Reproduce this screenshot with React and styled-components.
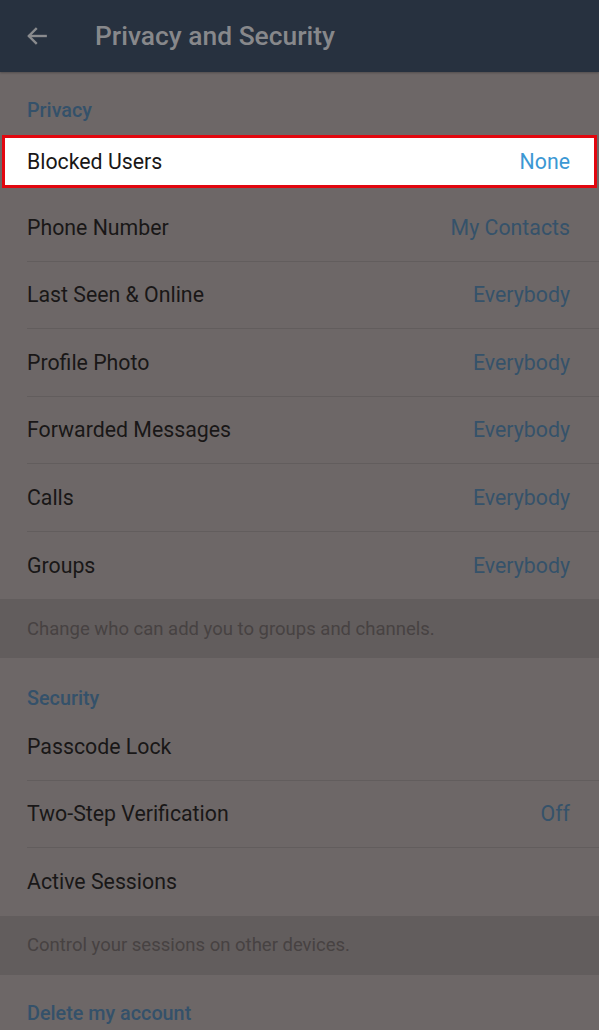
import React from "react";
import styled, { createGlobalStyle } from "styled-components";

const Global = createGlobalStyle`
  html, body { margin: 0; padding: 0; background: #6d6767; }
  body { font-family: Roboto, "Noto Sans", "Liberation Sans", sans-serif; }
  * { box-sizing: border-box; }
`;

const Page = styled.div`
  width: 599px;
  height: 1030px;
  overflow: hidden;
  background: #6d6767;
  display: flex;
  flex-direction: column;
`;

const Header = styled.header`
  height: 72px;
  flex: none;
  background: #27313f;
  display: flex;
  align-items: center;
  padding-left: 24px;
  gap: 45px;
  box-shadow: 0 1px 2px rgba(0, 0, 0, 0.25);
`;

const BackIcon = styled.svg`
  width: 26px;
  height: 26px;
  flex: none;
`;

const Title = styled.h1`
  margin: 0;
  font-size: 26.4px;
  font-weight: 500;
  color: #87888b;
`;

const SectionTitle = styled.div`
  height: ${(p) => p.$h}px;
  flex: none;
  padding: 0 27px;
  display: flex;
  align-items: flex-end;
  padding-bottom: ${(p) => p.$pb}px;
  font-size: 19.8px;
  font-weight: 500;
  color: #34516a;
`;

const Row = styled.div`
  height: 67.5px;
  flex: none;
  margin-left: 27px;
  padding-right: 29px;
  display: flex;
  align-items: center;
  justify-content: space-between;
  border-bottom: ${(p) => (p.$divider ? "1px solid #625d5d" : "none")};
`;

const Label = styled.span`
  font-size: 21.3px;
  color: #191717;
`;

const Value = styled.span`
  font-size: 21.3px;
  color: ${(p) => (p.$bright ? "#3c98d4" : "#35526a")};
`;

const HighlightWrap = styled.div`
  height: 68px;
  flex: none;
  padding: 9px 2px 6px 2px;
  display: flex;
`;

const HighlightBox = styled.div`
  flex: 1;
  background: #ffffff;
  border: 3px solid #e2070f;
  display: flex;
  align-items: center;
  justify-content: space-between;
  padding: 0 24px 0 22px;
`;

const InfoBand = styled.div`
  height: ${(p) => p.$h}px;
  flex: none;
  background: #625d5d;
  padding: 0 27px;
  display: flex;
  align-items: center;
  font-size: 18.5px;
  color: #474242;
`;

const privacyRows = [
  ["Phone Number", "My Contacts"],
  ["Last Seen & Online", "Everybody"],
  ["Profile Photo", "Everybody"],
  ["Forwarded Messages", "Everybody"],
  ["Calls", "Everybody"],
  ["Groups", "Everybody"],
];

const securityRows = [
  ["Passcode Lock", ""],
  ["Two-Step Verification", "Off"],
  ["Active Sessions", ""],
];

export default function App() {
  return (
    <>
      <Global />
      <Page>
        <Header>
          <BackIcon viewBox="0 0 24 24" fill="none" stroke="#8a8b8e" strokeWidth="2.2" strokeLinecap="square">
            <path d="M20 12H5" />
            <path d="M11 5.5L4.5 12L11 18.5" />
          </BackIcon>
          <Title>Privacy and Security</Title>
        </Header>

        <SectionTitle $h={54} $pb={4}>Privacy</SectionTitle>
        <HighlightWrap>
          <HighlightBox>
            <Label>Blocked Users</Label>
            <Value $bright>None</Value>
          </HighlightBox>
        </HighlightWrap>
        {privacyRows.map(([l, v], i) => (
          <Row key={l} $divider={i < privacyRows.length - 1}>
            <Label>{l}</Label>
            <Value>{v}</Value>
          </Row>
        ))}
        <InfoBand $h={59}>Change who can add you to groups and channels.</InfoBand>

        <SectionTitle $h={55} $pb={3}>Security</SectionTitle>
        {securityRows.map(([l, v], i) => (
          <Row key={l} $divider={i < securityRows.length - 1}>
            <Label>{l}</Label>
            <Value>{v}</Value>
          </Row>
        ))}
        <InfoBand $h={59}>Control your sessions on other devices.</InfoBand>

        <SectionTitle $h={50} $pb={0}>Delete my account</SectionTitle>
      </Page>
    </>
  );
}
